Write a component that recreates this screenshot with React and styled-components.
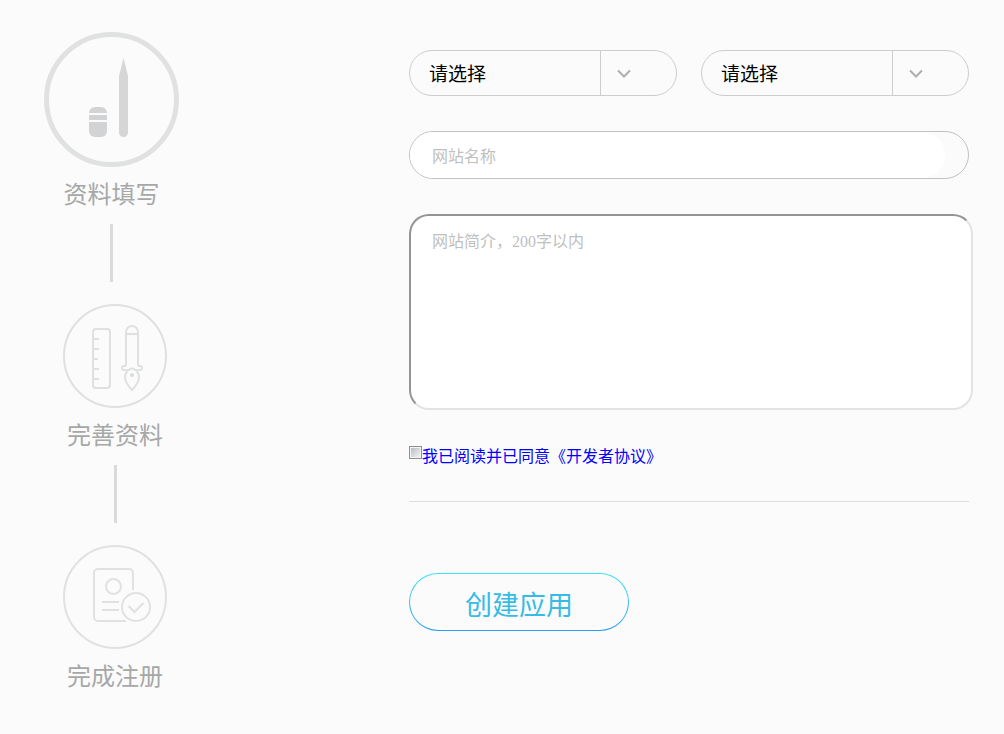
import React from 'react'
import styled, { createGlobalStyle } from 'styled-components'

const steps = [
  { label: '资料填写', Icon: PencilIcon, active: true },
  { label: '完善资料', Icon: RulerIcon },
  { label: '完成注册', Icon: ProfileIcon },
]

function PencilIcon() {
  return (
    <svg width="135" height="135" viewBox="0 0 135 135" aria-hidden="true">
      <circle cx="67.5" cy="67.5" r="65" fill="none" stroke="#e0e2e1" strokeWidth="5" />
      <g fill="#d1d3d4">
        <path d="M45 81a6 6 0 0 1 6-6h6a6 6 0 0 1 6 6z" />
        <path d="M45 83h18v5H45z" />
        <path d="M45 90h18v9a6 6 0 0 1-6 6h-6a6 6 0 0 1-6-6z" />
      </g>
      <path fill="#d6d6d6" d="M79.500 26L84 44v56.500a4.500 4.500 0 0 1-9 0V44z" />
    </svg>
  )
}

function RulerIcon() {
  return (
    <svg width="104" height="104" viewBox="0 0 104 104" aria-hidden="true">
      <g fill="none" stroke="#dfe0e0" strokeWidth="2">
        <circle cx="52" cy="52" r="51" />
        <rect x="30" y="25" width="17" height="59" rx="3" />
        <path d="M30 35h6M30 45h6M30 55h5M30 65h6M30 75h6" />
        <path d="M63 62V28a6 6 0 0 1 12 0v34M63 30h12" />
        <path d="M63 62h-2a2 2 0 0 0 0 4h5c1-2 5-2 6 0h5a2 2 0 0 0 0-4h-2" />
        <path d="M65 66c-5 6-3 13 4 20c7-7 9-14 4-20" />
      </g>
      <circle cx="69" cy="71" r="2" fill="#d9dbdb" />
    </svg>
  )
}

function ProfileIcon() {
  return (
    <svg width="104" height="104" viewBox="0 0 104 104" aria-hidden="true">
      <g fill="none" stroke="#e0e1e1" strokeWidth="2">
        <circle cx="52" cy="52" r="51" />
        <path d="M63 76H35a4 4 0 0 1-4-4V28a4 4 0 0 1 4-4h31a4 4 0 0 1 4 4v17" />
        <circle cx="50.500" cy="41.500" r="7.500" />
        <path d="M39 57h17M39 65h17" />
        <circle cx="73" cy="62" r="14" />
        <path d="M65.500 61l6 6l9-9" />
      </g>
    </svg>
  )
}

function SelectBox({ label }) {
  return (
    <SelectWrap>
      <Select aria-label={label} defaultValue="">
        <option value="">请选择</option>
      </Select>
      <Arrow>
        <svg width="16" height="10" viewBox="0 0 16 10" aria-hidden="true">
          <path d="M2 2.500l6 6l6-6" fill="none" stroke="#aeaeae" strokeWidth="2" />
        </svg>
      </Arrow>
    </SelectWrap>
  )
}

function App() {
  return (
    <Page>
      <GlobalStyle />
      <Steps>
        {steps.map(({ label, Icon, active }) => (
          <Step key={label} $active={active}>
            <Icon />
            <StepLabel>{label}</StepLabel>
          </Step>
        ))}
      </Steps>
      <Form onSubmit={(e) => e.preventDefault()}>
        <SelectRow>
          <SelectBox label="应用类型" />
          <SelectBox label="应用分类" />
        </SelectRow>
        <InputWrap>
          <Input type="text" aria-label="网站名称" placeholder="网站名称" />
        </InputWrap>
        <TextArea aria-label="网站简介" placeholder="网站简介，200字以内" />
        <Agreement>
          <Checkbox type="checkbox" aria-labelledby="agreement" />
          <AgreementLink id="agreement" href="#agreement">我已阅读并已同意《开发者协议》</AgreementLink>
        </Agreement>
        <SubmitBtn type="submit">创建应用</SubmitBtn>
      </Form>
    </Page>
  )
}

export default App

const GlobalStyle = createGlobalStyle`
*{
    box-sizing:border-box;
}
body{
    margin:0;
    background:#fbfbfb;
    font-family:"Liberation Sans","Noto Sans CJK SC",sans-serif;
}
`

const Page = styled.main`
display:flex;
align-items:flex-start;
`

const Steps = styled.ol`
flex:none;
width:409px;
margin:0;
padding:32px 0 0 44px;
list-style:none;
`

const Step = styled.li`
display:flex;
flex-direction:column;
align-items:center;
width:${(props) => (props.$active ? '135px' : '142px')};

svg{
    display:block;
}

&:not(:last-child)::after{
    content:"";
    width:3px;
    height:58px;
    margin:12px 0 22px;
    background:#dadada;
}
`

const StepLabel = styled.span`
margin-top:10px;
color:#a6a8a8;
font-size:24px;
line-height:35px;
`

const Form = styled.form`
flex:1;
min-width:0;
padding:50px 35px 32px 0;
`

const SelectRow = styled.div`
display:grid;
grid-template-columns:1fr 1fr;
gap:24px;
margin-bottom:35px;
`

const SelectWrap = styled.div`
display:grid;
height:46px;
border:1px solid #cdcdcd;
border-radius:23px;
overflow:hidden;
`

const Select = styled.select`
grid-area:1 / 1;
appearance:none;
width:100%;
padding:2px 80px 0 19px;
border:none;
outline:none;
background:transparent;
color:#000;
font-family:inherit;
font-size:19px;
`

const Arrow = styled.span`
grid-area:1 / 1;
justify-self:end;
display:flex;
align-items:center;
width:76px;
padding-left:15px;
border-left:1px solid #cdcdcd;
pointer-events:none;
`

const InputWrap = styled.div`
height:48px;
margin-bottom:35px;
padding-right:23px;
border:1px solid #c1c1c1;
border-radius:24px;
`

const Input = styled.input`
display:block;
width:100%;
height:100%;
padding:3px 22px 0;
border:none;
border-radius:24px;
outline:none;
background:#fff;
font-family:inherit;
font-size:16px;

&::placeholder{
    color:#bfbfbf;
}
`

const TextArea = styled.textarea`
display:block;
width:calc(100% + 4px);
height:196px;
padding:15px 21px;
border:2px solid;
border-color:#949494 #e3e3e3 #e3e3e3 #949494;
border-radius:20px;
outline:none;
resize:none;
background:#fff;
font-family:"Liberation Serif","Noto Sans CJK SC",serif;
font-size:16px;
line-height:22px;

&::placeholder{
    color:#bfbfbf;
}
`

const Agreement = styled.div`
display:flex;
align-items:flex-start;
margin-bottom:71px;
padding:36px 0 33px;
border-bottom:1px solid #dcdcdc;
`

const Checkbox = styled.input`
appearance:none;
flex:none;
width:13px;
height:13px;
margin:0;
border:1px solid #8e8f8f;
background:linear-gradient(135deg,#b8bcc2,#f3f3f3) content-box,#f4f4f4;
padding:1px;

&:checked{
    background:#3aaee8 content-box;
}
`

const AgreementLink = styled.a`
color:#00f;
font-size:16px;
line-height:22px;
text-decoration:none;
`

const SubmitBtn = styled.button`
width:220px;
height:58px;
padding:2px 0 0;
border:1px solid transparent;
border-radius:29px;
background:linear-gradient(#fbfbfb,#fbfbfb) padding-box,linear-gradient(#3fe5f2,#2a9df4) border-box;
color:#36bbe6;
font-family:inherit;
font-size:27px;
cursor:pointer;
`
